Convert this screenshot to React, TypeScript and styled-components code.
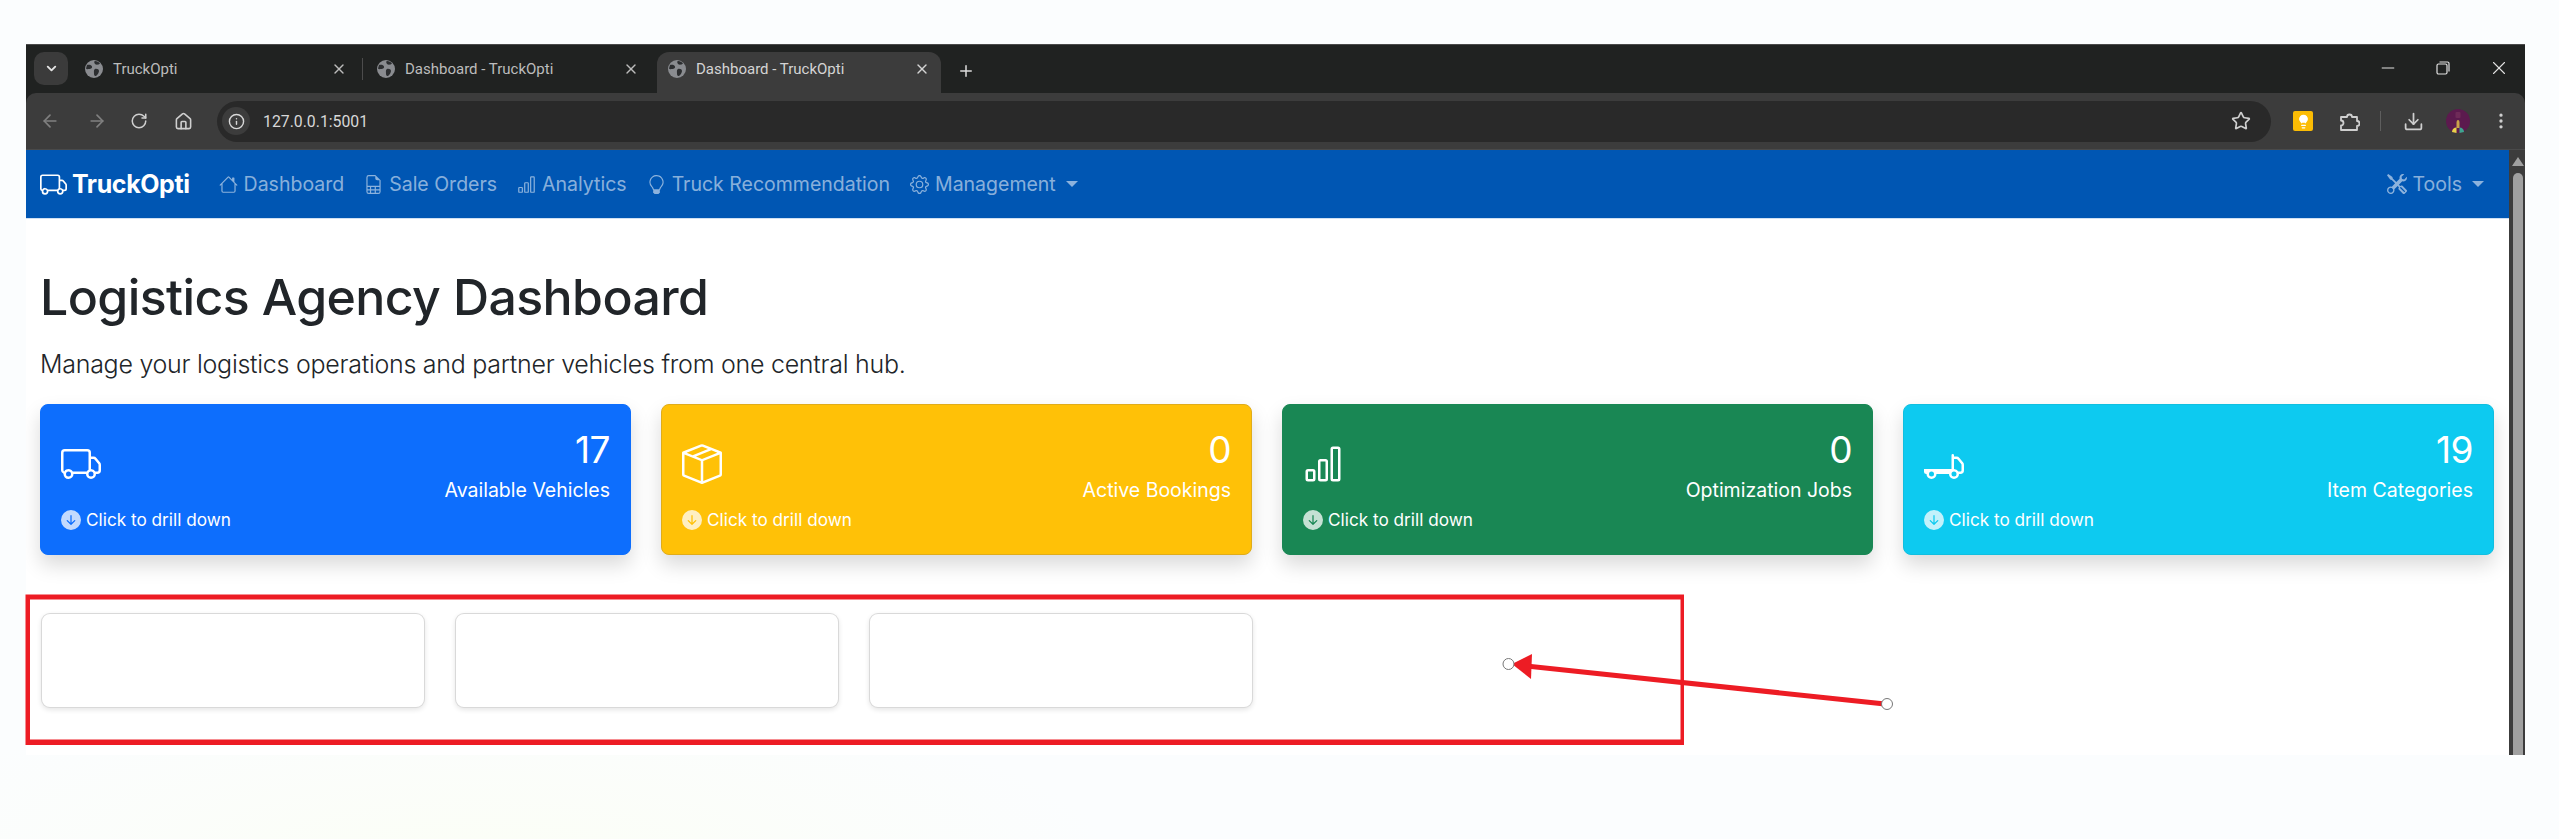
import React from "react";
import styled, { createGlobalStyle } from "styled-components";
import {
  BsTruck,
  BsHouse,
  BsFileEarmarkSpreadsheet,
  BsBarChart,
  BsLightbulb,
  BsGear,
  BsTools,
  BsBoxSeam,
  BsTruckFlatbed,
  BsArrowDownCircleFill,
} from "react-icons/bs";
import {
  ChevronDown,
  X,
  Plus,
  ArrowLeft,
  ArrowRight,
  RotateCw,
  Home,
  Info,
  Star,
  Download,
  Minus,
  MoreVertical,
  Lightbulb,
} from "lucide-react";

const GlobalStyle = createGlobalStyle`
  html, body {
    margin: 0;
    padding: 0;
    height: 839px;
    overflow: hidden;
  }
  body {
    background: radial-gradient(ellipse 900px 240px at 480px 860px, #fbfef6, #fbfdfe 70%), #fcfdff;
    font-family: Inter, "Noto Sans", sans-serif;
  }
  * {
    box-sizing: border-box;
  }
`;

const Stage = styled.div`
  position: relative;
  width: 2559px;
  height: 839px;
  padding: 44px 34px 0 26px;
`;

const Browser = styled.div`
  height: 711px;
  display: flex;
  flex-direction: column;
  overflow: hidden;
  background: #202221;
  border-top: 1px solid #4a4a4a;
`;

const TabStrip = styled.div`
  height: 48px;
  flex: none;
  display: flex;
  align-items: flex-end;
  padding-left: 8px;
`;

const TabSearch = styled.div`
  width: 34px;
  height: 33px;
  margin: 0 6px 8px 0;
  border-radius: 10px;
  background: #3b3b3b;
  color: #e4e4e4;
  display: flex;
  align-items: center;
  justify-content: center;
`;

const Tab = styled.div<{ $active?: boolean }>`
  width: 284px;
  height: 41px;
  padding: 0 11px 8px 11px;
  display: flex;
  align-items: center;
  gap: 10px;
  border-radius: 12px 12px 0 0;
  background: ${(p) => (p.$active ? "#3c3c3c" : "transparent")};
  color: ${(p) => (p.$active ? "#d4d4d4" : "#bcbcbc")};
  font-family: Roboto, sans-serif;
  font-size: 15px;
  span {
    flex: 1;
    white-space: nowrap;
  }
  & + & {
    margin-left: 7px;
  }
`;

const TabDivider = styled.div`
  width: 1px;
  height: 22px;
  margin: 0 3px 13px 4px;
  background: #4c4c4c;
`;

const NewTab = styled.div`
  margin: 0 0 13px 16px;
  color: #dcdcdc;
  display: flex;
`;

const WindowControls = styled.div`
  margin: 0 15px 14px auto;
  width: 132px;
  display: flex;
  align-items: center;
  justify-content: space-between;
  color: #e2e2e2;
`;

const GlobeIcon = () => (
  <svg width="18" height="18" viewBox="0 0 18 18">
    <circle cx="9" cy="9" r="9" fill="#8a8c90" />
    <path
      d="M2 5c2.500-.5 4.500 0 5 1.500S6 9 4.500 9 1.500 9.500 1 8.500zM10 9c2-.5 4 .5 4 2s-1.500 4-3 5c-1.500.5-2-1-2-2.500S8.500 9.500 10 9zM10 1c2 0 4 1 5 2.500C13.500 5 11 5 10 4s-1-3 0-3z"
      fill="#2c2e30"
    />
  </svg>
);

const RestoreIcon = () => (
  <svg width="16" height="16" viewBox="0 0 16 16" fill="none" stroke="currentColor" strokeWidth="1.2">
    <rect x="2" y="4" width="10" height="10" rx="1.5" />
    <path d="M4.500 2h8a1.500 1.500 0 0 1 1.500 1.500v8" />
  </svg>
);

const ExtensionIcon = () => (
  <svg width="22" height="22" viewBox="0 0 22 22" fill="none" stroke="currentColor" strokeWidth="1.8" strokeLinejoin="round">
    <path d="M3 7h6a2.500 2.500 0 0 1 5 0h5v4a2.500 2.500 0 0 1 0 5v4H3v-4.500a2.500 2.500 0 0 0 0-5z" />
  </svg>
);

const ProfileIcon = () => (
  <svg width="24" height="24" viewBox="0 0 24 24">
    <circle cx="12" cy="12" r="12" fill="#5c1a4e" />
    <rect x="9.500" y="3" width="5" height="6" rx="1" fill="#6f2a58" />
    <path d="M12 11c1 0 1.500 1 1.500 3v5h-3v-5c0-2 .5-3 1.500-3z" fill="#c9a24a" />
    <path d="M6 23c0-3 2-4.500 4.500-4.500V24z" fill="#e8d24a" />
    <path d="M18 23c0-3-2-4.500-4.500-4.500V24z" fill="#3fa58f" />
  </svg>
);

const Toolbar = styled.div`
  height: 57px;
  flex: none;
  display: flex;
  align-items: center;
  background: #3c3c3c;
  border-radius: 10px 10px 0 0;
  border-bottom: 1px solid #4a4a4a;
  padding: 0 14px;
  color: #cfcfcf;
`;

const NavButton = styled.div<{ $dim?: boolean; $gap: number }>`
  width: 20px;
  margin-right: ${(p) => p.$gap}px;
  display: flex;
  color: ${(p) => (p.$dim ? "#808080" : "#cfcfcf")};
`;

const Omnibox = styled.div`
  width: 2054px;
  height: 41px;
  margin-left: 23px;
  flex: none;
  display: flex;
  align-items: center;
  border-radius: 21px;
  background: #292929;
  padding: 0 20px 0 5px;
  color: #d8d8d8;
  font-family: Roboto, sans-serif;
  font-size: 15.8px;
`;

const SiteChip = styled.div`
  width: 28px;
  height: 28px;
  margin-right: 13px;
  border-radius: 50%;
  background: #3c3c3c;
  display: flex;
  align-items: center;
  justify-content: center;
`;

const StarSlot = styled.div`
  margin-left: auto;
  display: flex;
  color: #cfcfcf;
`;

const ToolIcons = styled.div`
  flex: 1;
  display: flex;
  align-items: center;
  padding-left: 22px;
  color: #cfcfcf;
`;

const KeepBadge = styled.div`
  width: 20px;
  height: 20px;
  border-radius: 2px;
  background: #fbbc04;
  color: #fff;
  display: flex;
  align-items: center;
  justify-content: center;
`;

const ToolSlot = styled.div<{ $left: number }>`
  margin-left: ${(p) => p.$left}px;
  display: flex;
`;

const ToolDivider = styled.div`
  width: 1px;
  height: 20px;
  margin-left: 20px;
  background: #5e5e5e;
`;

const Viewport = styled.div`
  flex: 1;
  min-height: 0;
  display: flex;
  background: #fff;
`;

const Page = styled.div`
  flex: 1;
  min-width: 0;
`;

const Scrollbar = styled.div`
  width: 16px;
  flex: none;
  background: #3c3c3c;
  padding: 7px 2px 0 4px;
  display: flex;
  flex-direction: column;
  align-items: center;
  gap: 7px;
`;

const ScrollArrow = styled.div`
  width: 0;
  height: 0;
  border-left: 6px solid transparent;
  border-right: 6px solid transparent;
  border-bottom: 9px solid #a0a0a0;
`;

const ScrollThumb = styled.div`
  flex: 1;
  width: 10px;
  border-radius: 5px 5px 0 0;
  background: #a0a0a0;
`;

const Navbar = styled.nav`
  height: 69px;
  display: flex;
  align-items: center;
  padding: 0 14px;
  background: #0056b3;
  border-bottom: 1px solid #cfe0f3;
`;

const Brand = styled.div`
  display: flex;
  align-items: center;
  gap: 5px;
  color: #fff;
  font-size: 25px;
  font-weight: 700;
  letter-spacing: -0.4px;
  margin-right: 29px;
`;

const NavLink = styled.div<{ $push?: boolean }>`
  display: flex;
  align-items: center;
  gap: 6px;
  margin-right: 20px;
  margin-left: ${(p) => (p.$push ? "auto" : 0)};
  color: rgba(255, 255, 255, 0.55);
  font-size: 19.500px;
  white-space: nowrap;
  &:last-child {
    margin-right: 11px;
  }
`;

const Caret = styled.span`
  width: 0;
  height: 0;
  margin-left: 4px;
  border-left: 6px solid transparent;
  border-right: 6px solid transparent;
  border-top: 6px solid currentColor;
`;

const Content = styled.main`
  padding: 48px 15px 0 14px;
`;

const Title = styled.h1`
  margin: 0;
  color: #212529;
  font-size: 50px;
  font-weight: 500;
  line-height: 60px;
  letter-spacing: -0.6px;
`;

const Lead = styled.p`
  margin: 19px 0 0;
  color: #212529;
  font-size: 25px;
  font-weight: 300;
  line-height: 37px;
  letter-spacing: -0.27px;
`;

const StatGrid = styled.div`
  margin-top: 21px;
  display: grid;
  grid-template-columns: repeat(4, 1fr);
  gap: 30px;
`;

const StatCard = styled.div<{ $bg: string; $edge: string }>`
  height: 151px;
  padding: 23px 20px 0;
  border: 1px solid ${(p) => p.$edge};
  border-radius: 8px;
  background: ${(p) => p.$bg};
  color: #fff;
  box-shadow: 0 10px 20px rgba(0, 0, 0, 0.15);
  display: flex;
  flex-direction: column;
`;

const StatTop = styled.div`
  display: flex;
  align-items: center;
  justify-content: space-between;
  > svg {
    margin-bottom: 5px;
  }
`;

const StatValue = styled.div`
  text-align: right;
`;

const StatNumber = styled.div`
  font-size: 37px;
  font-weight: 400;
  line-height: 44px;
  letter-spacing: -0.5px;
`;

const StatLabel = styled.div`
  margin-top: 4px;
  font-size: 19.500px;
  line-height: 28px;
`;

const DrillHint = styled.div`
  margin-top: 3px;
  display: flex;
  align-items: center;
  gap: 5px;
  font-size: 17.200px;
  line-height: 26px;
  svg {
    opacity: 0.75;
  }
`;

const EmptyRow = styled.div`
  margin-top: 58px;
  padding-left: 1px;
  display: flex;
  gap: 30px;
`;

const EmptyCard = styled.div`
  width: 384px;
  height: 95px;
  border: 1px solid rgba(0, 0, 0, 0.15);
  border-radius: 9px;
  background: #fff;
  box-shadow: 0 2px 5px rgba(0, 0, 0, 0.1);
`;

const Annotation = styled.svg`
  position: absolute;
  left: 0;
  top: 0;
  pointer-events: none;
`;

const navLinks = [
  { icon: BsHouse, label: "Dashboard" },
  { icon: BsFileEarmarkSpreadsheet, label: "Sale Orders" },
  { icon: BsBarChart, label: "Analytics" },
  { icon: BsLightbulb, label: "Truck Recommendation" },
];

const stats = [
  { icon: BsTruck, value: "17", label: "Available Vehicles", bg: "#0d6efd", edge: "#0d6efd" },
  { icon: BsBoxSeam, value: "0", label: "Active Bookings", bg: "#ffc107", edge: "#e0ac1a" },
  { icon: BsBarChart, value: "0", label: "Optimization Jobs", bg: "#198754", edge: "#198754" },
  { icon: BsTruckFlatbed, value: "19", label: "Item Categories", bg: "#0dcaf0", edge: "#10bfe0" },
];

export default function App() {
  return (
    <Stage>
      <GlobalStyle />
      <Browser>
        <TabStrip>
          <TabSearch>
            <ChevronDown size={15} strokeWidth={3} />
          </TabSearch>
          <Tab>
            <GlobeIcon />
            <span>TruckOpti</span>
            <X size={16} />
          </Tab>
          <TabDivider />
          <Tab>
            <GlobeIcon />
            <span>Dashboard - TruckOpti</span>
            <X size={16} />
          </Tab>
          <Tab $active>
            <GlobeIcon />
            <span>Dashboard - TruckOpti</span>
            <X size={16} />
          </Tab>
          <NewTab>
            <Plus size={18} />
          </NewTab>
          <WindowControls>
            <Minus size={20} strokeWidth={1.2} />
            <RestoreIcon />
            <X size={22} strokeWidth={1.2} />
          </WindowControls>
        </TabStrip>
        <Toolbar>
          <NavButton $dim $gap={27}>
            <ArrowLeft size={20} />
          </NavButton>
          <NavButton $dim $gap={23}>
            <ArrowRight size={20} />
          </NavButton>
          <NavButton $gap={24}>
            <RotateCw size={18} />
          </NavButton>
          <NavButton $gap={0}>
            <Home size={19} />
          </NavButton>
          <Omnibox>
            <SiteChip>
              <Info size={17} />
            </SiteChip>
            127.0.0.1:5001
            <StarSlot>
              <Star size={20} />
            </StarSlot>
          </Omnibox>
          <ToolIcons>
            <KeepBadge>
              <Lightbulb size={15} fill="#fff" />
            </KeepBadge>
            <ToolSlot $left={25}>
              <ExtensionIcon />
            </ToolSlot>
            <ToolDivider />
            <ToolSlot $left={22}>
              <Download size={21} />
            </ToolSlot>
            <ToolSlot $left={22}>
              <ProfileIcon />
            </ToolSlot>
            <ToolSlot $left={21}>
              <MoreVertical size={20} />
            </ToolSlot>
          </ToolIcons>
        </Toolbar>
        <Viewport>
          <Page>
            <Navbar>
              <Brand>
                <BsTruck size={27} />
                TruckOpti
              </Brand>
              {navLinks.map(({ icon: Icon, label }) => (
                <NavLink key={label}>
                  <Icon size={19} />
                  {label}
                </NavLink>
              ))}
              <NavLink>
                <BsGear size={19} />
                Management
                <Caret />
              </NavLink>
              <NavLink $push>
                <BsTools size={20} />
                Tools
                <Caret />
              </NavLink>
            </Navbar>
            <Content>
              <Title>Logistics Agency Dashboard</Title>
              <Lead>Manage your logistics operations and partner vehicles from one central hub.</Lead>
              <StatGrid>
                {stats.map(({ icon: Icon, value, label, bg, edge }) => (
                  <StatCard key={label} $bg={bg} $edge={edge}>
                    <StatTop>
                      <Icon size={40} />
                      <StatValue>
                        <StatNumber>{value}</StatNumber>
                        <StatLabel>{label}</StatLabel>
                      </StatValue>
                    </StatTop>
                    <DrillHint>
                      <BsArrowDownCircleFill size={20} />
                      Click to drill down
                    </DrillHint>
                  </StatCard>
                ))}
              </StatGrid>
              <EmptyRow>
                <EmptyCard />
                <EmptyCard />
                <EmptyCard />
              </EmptyRow>
            </Content>
          </Page>
          <Scrollbar>
            <ScrollArrow />
            <ScrollThumb />
          </Scrollbar>
        </Viewport>
      </Browser>
      <Annotation width="2559" height="839" viewBox="0 0 2559 839">
        <path
          d="M25.500 594.500H1684V745H25.500zM30 599.500V739.500H1680.500V599.500z"
          fill="#ed1c24"
          fillRule="evenodd"
        />
        <line x1="1885" y1="704" x2="1522" y2="665.500" stroke="#ed1c24" strokeWidth="5" />
        <polygon points="1512,664 1532,654 1531,679" fill="#ed1c24" />
        <circle cx="1508.500" cy="664" r="5.500" fill="#fff" stroke="#777" />
        <circle cx="1887" cy="704" r="5.500" fill="#fff" stroke="#777" />
      </Annotation>
    </Stage>
  );
}
